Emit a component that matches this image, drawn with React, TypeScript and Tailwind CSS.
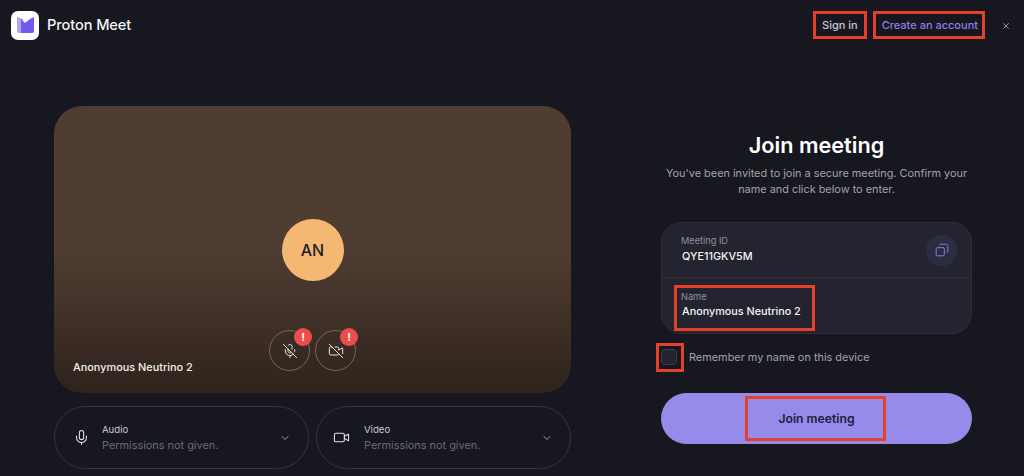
import { ChevronDown, Copy, Mic, MicOff, Video, VideoOff, X } from "lucide-react";
import type { ReactNode } from "react";

const font = { fontFamily: "Inter, sans-serif" };

function Marker({ className }: { className: string }) {
  return <div className={`pointer-events-none absolute border-[3px] border-[#e5412a] ${className}`} />;
}

function Logo() {
  return (
    <div className="flex items-center gap-[8px]">
      <div className="flex h-[29px] w-[28px] items-center justify-center rounded-[7px] bg-white">
        <svg width="19" height="18" viewBox="0 0 19 18">
          <path d="M1 1 L7 3 L7 17 L3 17 Q1 17 1 15 Z" fill="#b3a4f0" />
          <path d="M5 3 L9 7 L14 3 L18 1 L18 15 Q18 17 16 17 L5 17 Z" fill="#7458f0" />
        </svg>
      </div>
      <span className="pt-[1px] text-[14.6px] font-medium tracking-[-0.1px] text-[#f4f4f6]">Proton Meet</span>
    </div>
  );
}

function StatusButton({ children }: { children: ReactNode }) {
  return (
    <div className="relative flex h-[41px] w-[41px] items-center justify-center rounded-full border border-[#8b8178]/70 text-[#e4e2e0]">
      {children}
      <span className="absolute right-[-3px] top-[-3px] flex h-[18px] w-[18px] items-center justify-center rounded-full bg-[#ec4d4b] text-[11px] font-bold leading-none text-white">
        !
      </span>
    </div>
  );
}

function DevicePill({ label, icon }: { label: string; icon: ReactNode }) {
  return (
    <div className="flex h-[63px] flex-1 items-center rounded-full border border-[#34343f] pl-[18px] pr-[17px]">
      <div className="flex w-[29px] justify-start text-[#e4e4e8]">{icon}</div>
      <div className="flex-1">
        <div className="pt-[1px] text-[9.6px] leading-[14px] text-[#c9c9d0]">{label}</div>
        <div className="text-[10.9px] leading-[16px] text-[#6b6a7c]">Permissions not given.</div>
      </div>
      <ChevronDown size={12} strokeWidth={1.5} className="text-[#c9c9d0]" />
    </div>
  );
}

export default function App() {
  return (
    <div className="relative flex h-[476px] w-[1024px] flex-col overflow-hidden bg-[#16171f]" style={font}>
      <header className="flex h-[50px] items-center pl-[11px] pr-[13px]">
        <Logo />
        <div className="ml-auto flex items-center pt-[1px]">
          <a className="text-[11px] font-medium text-[#c9c8d2]">Sign in</a>
          <a className="ml-[24px] text-[11px] font-medium text-[#8f7fe0]">Create an account</a>
          <X size={10} className="ml-[23px] text-[#a8a8b0]" />
        </div>
      </header>

      <main className="flex pl-[54px] pt-[56px]">
        <section className="flex w-[517px] flex-col gap-[13px]">
          <div className="relative flex h-[287px] flex-col items-center rounded-[28px] bg-[linear-gradient(to_bottom,#4f3d32_0%,#4f3d32_50%,#2f231c_100%)] pt-[113px]">
            <div className="flex h-[62px] w-[62px] items-center justify-center rounded-full bg-[#f5b872] text-[16px] font-medium text-[#20202c]">
              AN
            </div>
            <div className="mt-[49px] flex gap-[5px]">
              <StatusButton>
                <MicOff size={16} strokeWidth={1.5} />
              </StatusButton>
              <StatusButton>
                <VideoOff size={16} strokeWidth={1.5} />
              </StatusButton>
            </div>
            <span className="absolute bottom-[18px] left-[19px] text-[10.9px] font-medium text-[#f2f0ee]">
              Anonymous Neutrino 2
            </span>
          </div>
          <div className="flex gap-[7px]">
            <DevicePill label="Audio" icon={<Mic size={17} strokeWidth={1.5} />} />
            <DevicePill label="Video" icon={<Video size={17} strokeWidth={1.5} className="ml-[-2px]" />} />
          </div>
        </section>

        <section className="ml-[90px] flex w-[311px] flex-col">
          <h1 className="mt-[24px] text-center text-[21.7px] font-semibold leading-[30px] text-white">Join meeting</h1>
          <p className="mt-[5px] whitespace-nowrap text-center text-[10.9px] leading-[16px] text-[#a3a3ad]">
            You've been invited to join a secure meeting. Confirm your
            <br />
            name and click below to enter.
          </p>

          <div className="mt-[25px] h-[112px] rounded-[20px] border border-[#2e2e3a] bg-[#23242f]">
            <div className="flex h-[55px] items-center border-b border-[#2e2e3a] pb-[2px] pl-[19px] pr-[14px]">
              <div className="flex-1">
                <div className="text-[9.2px] leading-[13px] text-[#90909c]">Meeting ID</div>
                <div className="mt-[3px] pl-[1px] text-[10.8px] font-medium leading-[14px] text-[#f4f4f6]">QYE11GKV5M</div>
              </div>
              <div className="mt-[2px] flex h-[31px] w-[31px] items-center justify-center rounded-full bg-[#2d2d40] text-[#8b7be0]">
                <Copy size={14} strokeWidth={1.7} className="scale-x-[-1]" />
              </div>
            </div>
            <div className="pl-[19px] pt-[12px]">
              <div className="text-[9.2px] leading-[13px] text-[#90909c]">Name</div>
              <div className="mt-[2px] pl-[1px] text-[10.8px] font-medium leading-[14px] text-[#f4f4f6]">Anonymous Neutrino 2</div>
            </div>
          </div>

          <label className="mt-[15px] flex items-center gap-[12px]">
            <span className="h-[16px] w-[16px] rounded-[4px] border border-[#3a3a48] bg-[#23242f]" />
            <span className="text-[10.9px] text-[#a3a3ad]">Remember my name on this device</span>
          </label>

          <button className="mt-[28px] flex h-[51px] items-center justify-center rounded-full bg-[#968aea] text-[12.2px] font-semibold text-[#211d3a]">
            Join meeting
          </button>
        </section>
      </main>

      <Marker className="left-[813px] top-[11px] h-[28px] w-[54px]" />
      <Marker className="left-[873px] top-[11px] h-[28px] w-[112px]" />
      <Marker className="left-[674px] top-[285px] h-[46px] w-[141px]" />
      <Marker className="left-[656px] top-[343px] h-[29px] w-[28px]" />
      <Marker className="left-[745px] top-[396px] h-[45px] w-[141px]" />
    </div>
  );
}
